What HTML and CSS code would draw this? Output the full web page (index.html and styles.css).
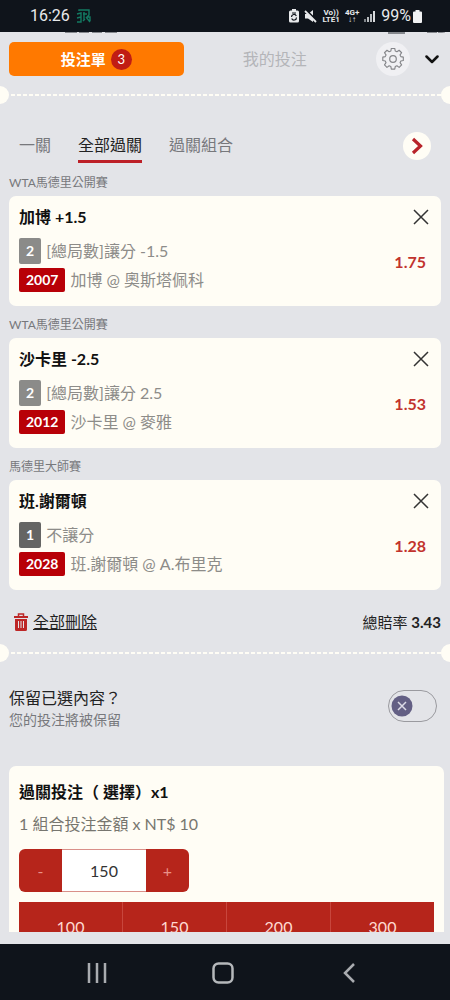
FILE: index.html
```html
<!DOCTYPE html>
<html lang="zh-Hant">
<head>
<meta charset="utf-8">
<meta name="viewport" content="width=device-width, initial-scale=1">
<title>投注單</title>
<link rel="stylesheet" href="styles.css">
</head>
<body>
<div class="screen">
  <header class="status">
    <span class="status-time">16:26</span>
    <svg class="status-app" width="16" height="14" viewBox="0 0 16 14" fill="none" stroke="#137a62" stroke-width="1.4"><path d="M3 2V1h10v5l-2 2h3v4M1 5l4-1v9H1M1 9l4-1M8 3v8M7 5h4M10 8l4 5M7 12l2-2"/></svg>
    <div class="status-icons">
      <svg width="10" height="14" viewBox="0 0 10 14"><path fill="#e8eaec" d="M3 0h4v1.500h1.500Q10 1.500 10 3v9q0 1.500-1.500 1.500h-7Q0 13.500 0 12V3q0-1.500 1.500-1.500H3z"/><path fill="none" stroke="#0f141b" stroke-width="1.200" d="M2.500 8a2.500 2.500 0 0 1 4.800-1M7.500 8.500a2.500 2.500 0 0 1-4.800 1M3 4h4"/></svg>
      <svg width="13" height="13" viewBox="0 0 13 13"><path fill="#e8eaec" d="M1 4h3l5-4v12L4 8.500H1z"/><path stroke="#0f141b" stroke-width="2" d="M2 0l11 11"/><path stroke="#e8eaec" stroke-width="1.800" d="M1 1l11 11"/></svg>
      <span class="net net-volte">Vo))<br>LTE1</span>
      <span class="net">4G+<br>↓↑</span>
      <svg width="12" height="12" viewBox="0 0 12 12"><path fill="#7f8489" d="M0 9h2v3H0z"/><path fill="#b9bdc0" d="M3 7h2v5H3zM6 4h2v8H6z"/><path fill="#d9dbdd" d="M9 1h2v11H9z"/></svg>
      <span class="battery-text">99%</span>
      <svg width="9" height="13" viewBox="0 0 9 13"><path fill="#f1f2f3" d="M2.500 0h4v1.500H8q1 0 1 1V12q0 1-1 1H1q-1 0-1-1V2.500q0-1 1-1h1.500z"/></svg>
    </div>
  </header>

  <main class="slip">
    <svg class="peek" width="100%" height="2" aria-hidden="true"><path fill="#85888d" d="M65 0h12v1H65zM79 0h10v1H79zM92 0h10v1H92zM105 0h12v1h-12zM388 0h17v2h-17zM427 0h10v1h-10zM438 0h7v1h-7z"/></svg>
    <div class="top">
      <div class="top-tabs">
        <button class="top-tab top-tab-on">投注單 <span class="count">3</span></button>
        <button class="top-tab">我的投注</button>
      </div>
      <button class="gear" aria-label="設定"><svg width="22" height="22" viewBox="0 0 22 22" fill="none" stroke="#85868a" stroke-width="1.200" stroke-linejoin="round"><path d="M9.200 1h3.600l.5 2.700 1.800.8 2.300-1.600 2.600 2.600-1.600 2.300.8 1.800 2.600.5v3.600l-2.600.5-.8 1.800 1.600 2.300-2.600 2.600-2.300-1.600-1.800.8-.5 2.700H9.200l-.5-2.700-1.800-.8-2.300 1.600L2 18.300 3.600 16l-.8-1.800-2.600-.5v-3.600l2.600-.5.8-1.800L2 5.500l2.600-2.600 2.300 1.600 1.800-.8z" transform="translate(.6 -.5) scale(.95)"/><circle cx="11" cy="11" r="3.300"/></svg></button>
      <button class="collapse" aria-label="收合"><svg width="14" height="9" viewBox="0 0 14 9" fill="none" stroke="#111" stroke-width="2.500" stroke-linecap="round" stroke-linejoin="round"><path d="M1.500 1.500L7 7l5.500-5.500"/></svg></button>
    </div>

    <div class="perforation"></div>

    <nav class="modes">
      <button class="mode">一關</button>
      <button class="mode mode-on">全部過關</button>
      <button class="mode">過關組合</button>
      <button class="next" aria-label="下一個"><svg width="12" height="18" viewBox="0 0 12 18" fill="none" stroke="#b8232a" stroke-width="3.200"><path d="M2 2l7.500 7L2 16"/></svg></button>
    </nav>

    <section class="bet">
      <h2 class="league">WTA馬德里公開賽</h2>
      <article class="card">
        <div class="card-info">
          <h3 class="pick">加博 +1.5</h3>
          <p class="line"><span class="tag">2</span>[總局數]讓分 -1.5</p>
          <p class="line line-match"><span class="tag tag-red">2007</span>加博 @ 奧斯塔佩科</p>
        </div>
        <div class="card-side">
          <button class="close" aria-label="刪除"><svg width="16" height="16" viewBox="0 0 16 16" stroke="#333" stroke-width="1.500"><path d="M1 1l14 14M15 1L1 15"/></svg></button>
          <span class="odds">1.75</span>
        </div>
      </article>
    </section>

    <section class="bet">
      <h2 class="league">WTA馬德里公開賽</h2>
      <article class="card">
        <div class="card-info">
          <h3 class="pick">沙卡里 -2.5</h3>
          <p class="line"><span class="tag">2</span>[總局數]讓分 2.5</p>
          <p class="line line-match"><span class="tag tag-red">2012</span>沙卡里 @ 麥雅</p>
        </div>
        <div class="card-side">
          <button class="close" aria-label="刪除"><svg width="16" height="16" viewBox="0 0 16 16" stroke="#333" stroke-width="1.500"><path d="M1 1l14 14M15 1L1 15"/></svg></button>
          <span class="odds">1.53</span>
        </div>
      </article>
    </section>

    <section class="bet">
      <h2 class="league">馬德里大師賽</h2>
      <article class="card">
        <div class="card-info">
          <h3 class="pick">班.謝爾頓</h3>
          <p class="line"><span class="tag tag-dark">1</span>不讓分</p>
          <p class="line line-match"><span class="tag tag-red">2028</span>班.謝爾頓 @ A.布里克</p>
        </div>
        <div class="card-side">
          <button class="close" aria-label="刪除"><svg width="16" height="16" viewBox="0 0 16 16" stroke="#333" stroke-width="1.500"><path d="M1 1l14 14M15 1L1 15"/></svg></button>
          <span class="odds">1.28</span>
        </div>
      </article>
    </section>

    <div class="summary">
      <button class="clear"><svg width="14" height="18" viewBox="0 0 14 18"><path fill="none" stroke="#bd2626" stroke-width="1.500" d="M4.500 3V1h5v2"/><path fill="#bd2626" d="M0 3h14v2H0zM1 6h12v10.500q0 1.500-1.500 1.500h-9Q1 18 1 16.500z"/><path stroke="#e3e4e8" stroke-width="1" d="M4.500 8v7M7 8v7M9.500 8v7"/></svg><span class="clear-text">全部刪除</span></button>
      <p class="total">總賠率 <b>3.43</b></p>
    </div>

    <div class="perforation"></div>

    <label class="keep">
      <span class="keep-text"><span class="keep-title">保留已選內容？</span><span class="keep-note">您的投注將被保留</span></span>
      <span class="switch"><input class="switch-input" type="checkbox"><svg class="knob" width="22" height="22" viewBox="0 0 22 22"><circle cx="11" cy="11" r="10.500" fill="#635f84"/><path stroke="#dcdbe6" stroke-width="1.500" d="M7 7l8 8M15 7l-8 8"/></svg></span>
    </label>

    <section class="stake">
      <h2 class="stake-title">過關投注（ 選擇）x1</h2>
      <p class="stake-note">1 組合投注金額 x NT$ 10</p>
      <div class="stepper">
        <button class="step" aria-label="減少">-</button>
        <input class="amount" type="text" value="150" aria-label="投注金額">
        <button class="step" aria-label="增加">+</button>
      </div>
      <div class="presets">
        <button class="preset">100</button><button class="preset">150</button><button class="preset">200</button><button class="preset">300</button>
      </div>
    </section>
  </main>

  <footer class="navbar">
    <button class="navbar-key" aria-label="最近"><svg width="20" height="20" viewBox="0 0 20 20" stroke="#a9acb0" stroke-width="2.500"><path d="M2 0v20M10 0v20M18 0v20"/></svg></button>
    <button class="navbar-key" aria-label="首頁"><svg width="22" height="22" viewBox="0 0 22 22" fill="none" stroke="#b5b8bb" stroke-width="2.500"><rect x="1.500" y="1.500" width="19" height="19" rx="5"/></svg></button>
    <button class="navbar-key" aria-label="返回"><svg width="12" height="20" viewBox="0 0 12 20" fill="none" stroke="#a9acb0" stroke-width="2.500"><path d="M11 1L2 10l9 9"/></svg></button>
  </footer>
</div>
</body>
</html>
```
FILE: styles.css
```css
* { box-sizing: border-box; }

body {
  margin: 0;
  background: #0f141b;
  color: #222;
  font-family: Lato, "Noto Sans CJK TC", sans-serif;
  font-size: 16px;
  line-height: 24px;
}

h2, h3, p { margin: 0; font-size: 16px; font-weight: 400; }

button {
  display: flex;
  align-items: center;
  justify-content: center;
  margin: 0;
  padding: 0;
  border: 0;
  background: none;
  color: inherit;
  font: inherit;
}

svg { display: block; flex: none; }

.screen {
  display: flex;
  flex-direction: column;
  height: 100vh;
  background: #e3e4e8;
}

/* status bar */
.status {
  display: flex;
  flex: none;
  align-items: center;
  height: 32px;
  padding: 0 28px 0 30px;
  background: #0f141b;
  color: #e8eaec;
  font-family: Roboto, sans-serif;
}
.status-app { margin-left: 6px; }
.status-icons {
  display: flex;
  align-items: center;
  gap: 5px;
  margin-left: auto;
}
.net { font-size: 8px; font-weight: 700; line-height: 7px; text-align: center; }
.battery-text { margin-right: -3px; }

/* slip */
.slip {
  flex: 1;
  min-height: 0;
  margin-bottom: 12px;
  overflow: hidden;
  border-radius: 8px 8px 0 0;
}
.peek { margin-bottom: 8px; }

.top { display: flex; align-items: center; padding-left: 9px; height: 34px; }
.top-tabs { display: flex; flex: 1; gap: 4px; }
.top-tab {
  flex: 1;
  height: 34px;
  gap: 5px;
  border-radius: 5px;
  color: #b4b5b9;
}
.top-tab-on { background: #ff7900; color: #fff; font-size: 15px; font-weight: 700; }
.count {
  width: 21px;
  border-radius: 50%;
  background: #c01c14;
  font-size: 13px;
  font-weight: 400;
  line-height: 21px;
}
.gear {
  width: 34px;
  height: 34px;
  margin-left: 14px;
  border-radius: 50%;
  background: #f0f0f3;
}
.collapse { width: 40px; height: 34px; padding-left: 4px; }

.perforation {
  display: flex;
  align-items: center;
  justify-content: space-between;
  height: 18px;
  margin: 10px -9px 0;
  overflow: hidden;
  background: repeating-linear-gradient(90deg, #fffdf5 0 4px, transparent 4px 6px) 20px center / calc(100% - 38px) 2px no-repeat;
}
.perforation::before, .perforation::after {
  content: "";
  width: 18px;
  height: 18px;
  border-radius: 50%;
  background: #fffdf5;
}

.modes {
  display: flex;
  align-items: center;
  gap: 27px;
  height: 60px;
  padding: 24px 19px 0;
  color: #77787c;
}
.mode { height: 34px; border-bottom: 3px solid transparent; }
.mode-on { border-color: #bd2028; color: #222; }
.next {
  width: 28px;
  height: 28px;
  margin-left: auto;
  border-radius: 50%;
  background: #fffdf5;
}

.bet { padding: 0 9px; }
.league {
  height: 32px;
  padding-top: 7px;
  color: #77787c;
  font-size: 12px;
}
.card {
  display: flex;
  justify-content: space-between;
  min-height: 110px;
  padding: 9px 12px 12px 10px;
  border-radius: 7px;
  background: #fffdf5;
}
.pick { margin-bottom: 9px; color: #111; font-weight: 700; }
.line { display: flex; align-items: center; gap: 5px; height: 26px; color: #8d8c89; }
.line-match { height: 24px; margin-top: 4px; }
.tag {
  padding: 0 7px;
  border-radius: 2px;
  background: #8b8b89;
  color: #fff;
  font-size: 14px;
  font-weight: 700;
  line-height: 26px;
}
.tag-dark { background: #656564; }
.tag-red { line-height: 24px; background: #b80007; }
.card-side {
  display: flex;
  flex-direction: column;
  align-items: flex-end;
  gap: 25px;
  padding-top: 4px;
}
.odds { padding-right: 3px; color: #c2332d; font-weight: 700; }

.summary {
  display: flex;
  align-items: center;
  justify-content: space-between;
  height: 44px;
  padding: 0 9px 0 14px;
  margin-top: 10px;
}
.clear { gap: 5px; }
.clear-text { text-decoration: underline; }
.total { font-size: 15px; }
.summary + .perforation { margin-top: 0; }

.keep {
  display: flex;
  align-items: center;
  justify-content: space-between;
  padding: 24px 13px 35px 9px;
}
.keep-text { display: flex; flex-direction: column; }
.keep-title { line-height: 24px; }
.keep-note { color: #77787c; font-size: 14px; line-height: 20px; }
.switch { display: grid; align-items: center; margin-bottom: 4px; }
.switch-input {
  grid-area: 1 / 1;
  width: 49px;
  height: 32px;
  margin: 0;
  appearance: none;
  border: 1px solid #9a9a9f;
  border-radius: 16px;
}
.knob { grid-area: 1 / 1; margin-left: 3px; }

/* stake */
.stake {
  margin: 1px 6px 0 9px;
  padding: 14px 10px;
  border-radius: 7px 7px 0 0;
  background: #fffdf5;
}
.stake-title { color: #111; font-weight: 700; }
.stake-note { margin: 8px 0 13px; color: #77766f; }
.stepper {
  display: flex;
  width: 170px;
  height: 43px;
  overflow: hidden;
  border-radius: 6px;
}
.step { width: 43px; background: #b6251b; color: #e99288; }
.amount {
  flex: 1;
  min-width: 0;
  padding: 0;
  border: solid #d99089;
  border-width: 1px 0;
  border-radius: 0;
  background: #fff;
  color: #333;
  font: inherit;
  text-align: center;
}
.presets { display: flex; margin-top: 10px; }
.preset { flex: 1; height: 50px; background: #b6251b; color: #ffd9d0; }
.preset + .preset { border-left: 1px solid #c8463d; }

/* system navigation */
.navbar {
  display: flex;
  flex: none;
  align-items: center;
  justify-content: center;
  height: 56px;
  padding: 2px 38px 0 34px;
  background: #0f141b;
}
.navbar-key { flex: 1; height: 54px; }
```
